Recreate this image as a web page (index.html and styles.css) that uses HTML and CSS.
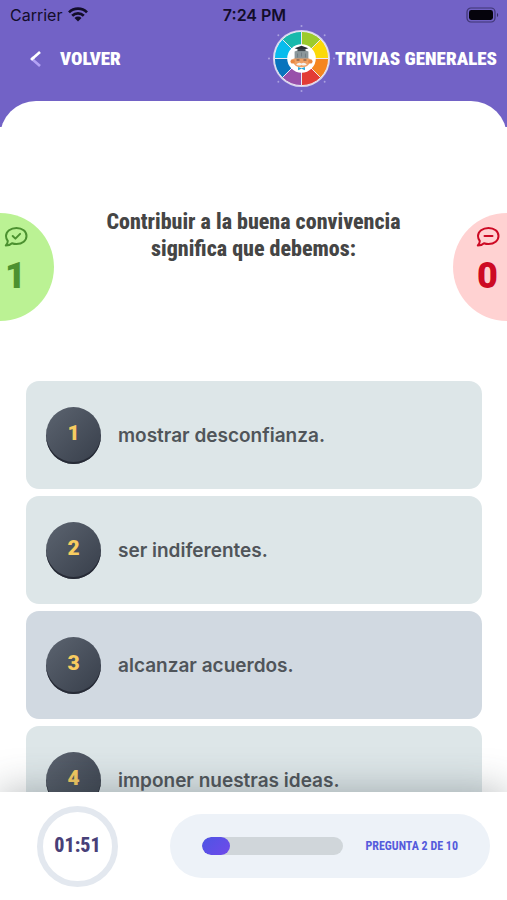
FILE: index.html
```html
<!DOCTYPE html>
<html lang="es">
<head>
<meta charset="utf-8">
<meta name="viewport" content="width=device-width, initial-scale=1">
<title>Trivias generales</title>
<link rel="stylesheet" href="styles.css">
</head>
<body>
<div class="app">
  <header class="header">
    <div class="status">
      <div class="carrier">
        <span>Carrier</span>
        <svg class="wifi" viewBox="0 0 20 15" aria-hidden="true">
          <path d="M1 5.4a12.8 12.8 0 0 1 18 0M4.2 8.7a8.3 8.3 0 0 1 11.6 0" fill="none" stroke="currentColor" stroke-width="2.7"/>
          <path d="M6.5 11a5 5 0 0 1 7 0L10 14.6z" fill="currentColor"/>
        </svg>
      </div>
      <span class="clock">7:24 PM</span>
      <svg class="battery" viewBox="0 0 33 16" aria-hidden="true">
        <rect x="1" y="1" width="28" height="14" rx="4" fill="none" stroke="#0b0822" stroke-opacity=".5" stroke-width="1.2"/>
        <rect x="3" y="3" width="24" height="10" rx="2.4" fill="#05030c"/>
        <path d="M31 6c1.600.6 1.600 3.400 0 4z" fill="#0b0822" fill-opacity=".6"/>
      </svg>
    </div>
    <nav class="nav">
      <button class="back" type="button">
        <svg class="chevron" viewBox="0 0 12 18" aria-hidden="true">
          <path d="M10 2 2 9" stroke="#fff"/>
          <path d="M2 9l8 7" stroke="#b3a2f5"/>
          <path d="M4 7.300 2 9l1 .9" stroke="#fff"/>
        </svg>
        <span>VOLVER</span>
      </button>
      <div class="topic">
        <svg class="wheel" viewBox="-34 -34 68 68" aria-hidden="true">
          <circle r="29" fill="#d5d2ee"/>
          <g stroke="#ece9f5" stroke-width="1">
            <path d="M0 0V-27.500A27.500 27.500 0 0 1 19.450-19.450z" fill="#9ccb2c"/>
            <path d="M0 0 19.450-19.450A27.500 27.500 0 0 1 27.500 0z" fill="#fbd908"/>
            <path d="M0 0H27.500A27.500 27.500 0 0 1 19.450 19.450z" fill="#f5851f"/>
            <path d="M0 0 19.450 19.450A27.500 27.500 0 0 1 0 27.500z" fill="#e33b35"/>
            <path d="M0 0V27.500A27.500 27.500 0 0 1-19.450 19.450z" fill="#9850aa"/>
            <path d="M0 0-19.450 19.450A27.500 27.500 0 0 1-27.500 0z" fill="#0874bd"/>
            <path d="M0 0H-27.500A27.500 27.500 0 0 1-19.450-19.450z" fill="#08bced"/>
            <path d="M0 0-19.450-19.450A27.500 27.500 0 0 1 0-27.500z" fill="#17b9ac"/>
          </g>
          <circle r="14.500" fill="#fff"/>
          <path d="M-7 1v-8q7-4 14 0v8z" fill="#8b979b"/>
          <path d="M-4-5v4M0-6v4M4-5v4" stroke="#717d82" stroke-width="1"/>
          <path d="M-8 0H8l1 3q-2 6-9 6t-9-6z" fill="#efa063"/>
          <circle cx="-9" cy="3" r="2.200" fill="#e9873f"/>
          <circle cx="9" cy="3" r="2.200" fill="#e9873f"/>
          <path d="M-5 1.500h3M2 1.500h3" stroke="#5b4240" stroke-width="1.200"/>
          <path d="M-5.500 6Q-3 3.500 0 5q3-1.500 5.500 1Q3 8 0 6.500-3 8-5.500 6z" fill="#f4f1ef"/>
          <path d="M-3.500 8.500 0 10l3.500-1.500v3.500L0 10.500-3.500 12z" fill="#23a9dc"/>
          <path d="M-7-10.500 0-13l7 2.500L0-8z" fill="#292e35"/>
          <path d="M-4-9.500h8v2h-8z" fill="#3c454b"/>
          <g fill="#aaa0df">
            <circle cy="-33" r="1"/><circle cy="33" r="1"/><circle cx="33" r="1"/><circle cx="-33" r="1"/>
            <circle cx="23.500" cy="-23.500" r="1"/><circle cx="-23.500" cy="-23.500" r="1"/>
            <circle cx="23.500" cy="23.500" r="1"/><circle cx="-23.500" cy="23.500" r="1"/>
          </g>
        </svg>
        <span>TRIVIAS GENERALES</span>
      </div>
    </nav>
  </header>

  <main class="sheet">
    <section class="intro">
      <div class="score score-right">
        <svg class="bubble" viewBox="0 0 24 22" aria-label="Correctas">
          <path d="M12.500 2C18.400 2 22.500 5.500 22.500 10s-4.100 8-10 8c-1.700 0-3.200-.3-4.500-.8C6.500 18.700 4 19.500 1.800 19.500c1.200-1.200 2-2.900 2-4.500C2.600 13.600 2 11.900 2 10c0-4.500 4.600-8 10.500-8z"/>
          <path d="M8.700 10l2.700 2.600 4.700-4.700"/>
        </svg>
        <span>1</span>
      </div>
      <h1 class="question">Contribuir a la buena convivencia significa que debemos:</h1>
      <div class="score score-wrong">
        <svg class="bubble" viewBox="0 0 24 22" aria-label="Incorrectas">
          <path d="M12.500 2C18.400 2 22.500 5.500 22.500 10s-4.100 8-10 8c-1.700 0-3.200-.3-4.500-.8C6.500 18.700 4 19.500 1.800 19.500c1.200-1.200 2-2.900 2-4.500C2.600 13.600 2 11.900 2 10c0-4.500 4.600-8 10.500-8z"/>
          <path d="M8.500 10h8"/>
        </svg>
        <span>0</span>
      </div>
    </section>
    <div class="options">
      <button class="option" type="button"><span class="number">1</span><span>mostrar desconfianza.</span></button>
      <button class="option" type="button"><span class="number">2</span><span>ser indiferentes.</span></button>
      <button class="option option-active" type="button"><span class="number">3</span><span>alcanzar acuerdos.</span></button>
      <button class="option" type="button"><span class="number">4</span><span>imponer nuestras ideas.</span></button>
    </div>
  </main>

  <footer class="footer">
    <div class="timer">01:51</div>
    <div class="progress">
      <div class="track"><div class="fill" style="width: 20%"></div></div>
      <span class="count">PREGUNTA 2 DE 10</span>
    </div>
  </footer>
</div>
</body>
</html>
```
FILE: styles.css
```css
:root {
  --purple: #7262c6;
  --condensed: "Roboto Condensed", "Liberation Sans Narrow", sans-serif;
}

* {
  box-sizing: border-box;
}

body {
  margin: 0;
  background: #fff;
  font-family: Inter, sans-serif;
}

button {
  border: 0;
  padding: 0;
  background: none;
  font: inherit;
  color: inherit;
  text-align: left;
  cursor: pointer;
}

.app {
  display: flex;
  flex-direction: column;
  height: 100vh;
}

.header {
  flex: none;
  padding-bottom: 35px;
  background: var(--purple);
}

.status {
  display: grid;
  grid-template-columns: 1fr auto 1fr;
  align-items: center;
  height: 25px;
  padding: 4px 8px 0 10px;
  font-size: 16px;
  color: #120d2a;
}

.carrier {
  display: flex;
  align-items: center;
  gap: 6px;
}

.wifi {
  width: 20px;
  height: 15px;
}

.clock {
  font-weight: 600;
}

.battery {
  justify-self: end;
  width: 33px;
  height: 16px;
}

.nav {
  display: flex;
  align-items: center;
  justify-content: space-between;
  padding: 0 10px 0 30px;
  font-family: var(--condensed);
  font-size: 19px;
  font-weight: 900;
  color: #fff;
}

.back {
  display: flex;
  align-items: center;
  gap: 18px;
}

.chevron {
  width: 12px;
  height: 18px;
  fill: none;
  stroke-width: 2.6;
}

.topic {
  display: flex;
  align-items: center;
}

.wheel {
  width: 67px;
  height: 67px;
}

.sheet {
  flex: 1;
  min-height: 0;
  margin-top: -26px;
  border-radius: 36px 36px 0 0;
  background: #fff;
  overflow: hidden;
}

.intro {
  display: grid;
  grid-template-columns: 54px 1fr 54px;
  align-items: start;
  padding: 107px 0 60px;
}

.question {
  justify-self: center;
  max-width: 320px;
  margin: 0;
  font-family: var(--condensed);
  font-size: 22px;
  font-weight: 800;
  line-height: 27px;
  text-align: center;
  color: #454545;
}

.score {
  display: flex;
  flex-direction: column;
  align-items: center;
  gap: 7px;
  height: 108px;
  margin-top: 5px;
  padding-top: 13px;
  font-family: Roboto, sans-serif;
  font-size: 36px;
  font-weight: 900;
  line-height: 42px;
}

.score-right {
  padding-right: 23px;
  border-radius: 0 54px 54px 0;
  background: #bbf294;
  color: #4c9130;
}

.score-wrong {
  padding-left: 15px;
  border-radius: 54px 0 0 54px;
  background: #ffd2d2;
  color: #cd0a24;
}

.bubble {
  width: 24px;
  height: 22px;
  fill: none;
  stroke: currentColor;
  stroke-width: 2;
  stroke-linecap: round;
  stroke-linejoin: round;
}

.options {
  display: flex;
  flex-direction: column;
  gap: 7px;
  padding: 0 25px 0 26px;
}

.option {
  display: flex;
  align-items: center;
  gap: 17px;
  height: 108px;
  padding: 0 20px;
  border-radius: 13px;
  background: #dde6e8;
  font-family: Inter, sans-serif;
  font-size: 19px;
  font-weight: 600;
  color: #50555a;
}

.option-active {
  background: #d1d9e1;
}

.number {
  display: grid;
  place-items: center;
  flex: none;
  width: 55px;
  height: 57px;
  padding-bottom: 4px;
  border-radius: 50%;
  background: linear-gradient(135deg, #5c6470, #373e4a);
  box-shadow: inset 0 -2px 0 #272b36;
  font-family: Roboto, sans-serif;
  font-size: 21px;
  font-weight: 900;
  color: #f8cc60;
}

.footer {
  position: relative;
  flex: none;
  display: flex;
  align-items: center;
  gap: 52px;
  height: 108px;
  padding: 0 17px 0 37px;
  background: #fff;
  box-shadow: 0 0 40px rgba(60, 70, 75, 0.4);
}

.timer {
  display: grid;
  place-items: center;
  flex: none;
  width: 81px;
  height: 81px;
  padding-bottom: 2px;
  border: 6px solid #e3e8ef;
  border-radius: 50%;
  font-family: var(--condensed);
  font-size: 20px;
  font-weight: 800;
  color: #484078;
}

.progress {
  flex: 1;
  display: flex;
  align-items: center;
  gap: 22px;
  height: 64px;
  padding: 0 32px;
  border-radius: 32px;
  background: #edf2f8;
}

.track {
  flex: 1;
  height: 18px;
  border-radius: 9px;
  background: #d0d6da;
  overflow: hidden;
}

.fill {
  height: 100%;
  border-radius: 9px;
  background: linear-gradient(135deg, #4d55e4, #7049ea);
}

.count {
  font-family: var(--condensed);
  font-size: 12px;
  font-weight: 700;
  color: #555bdc;
}
```
